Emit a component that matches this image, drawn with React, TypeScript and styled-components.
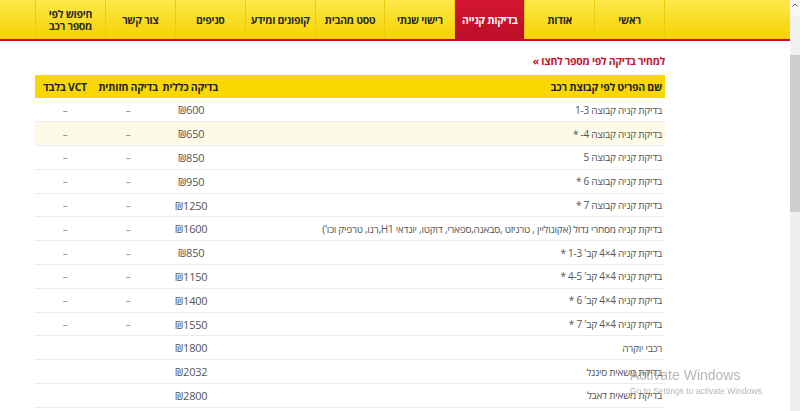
import React from "react";
import styled, { createGlobalStyle } from "styled-components";

const Global = createGlobalStyle`
  html, body { margin: 0; padding: 0; background: #fff; overflow: hidden; }
  body { font-family: "Open Sans", "Liberation Sans", "DejaVu Sans", sans-serif; }
  * { box-sizing: border-box; }
`;

const Page = styled.div`
  display: flex;
  width: 800px;
  height: 411px;
  overflow: hidden;
`;

const Main = styled.div`
  flex: 1;
  direction: rtl;
  min-width: 0;
`;

const NavBar = styled.nav`
  height: 41px;
  background: linear-gradient(#fde84a, #f6d300);
  border-bottom: 2px solid #c8102e;
`;

const NavInner = styled.ul`
  list-style: none;
  margin: 0 125px 0 0;
  padding: 0;
  width: 630px;
  height: 39px;
  display: flex;
  border-right: 1px solid #eccb12;
`;

const NavItem = styled.li<{ $active?: boolean }>`
  width: 70px;
  height: 39px;
  display: flex;
  align-items: center;
  justify-content: center;
  text-align: center;
  font-size: 10.5px;
  letter-spacing: -0.3px;
  line-height: 12px;
  font-weight: 700;
  color: ${(p) => (p.$active ? "#fff" : "#2a2a2a")};
  background: ${(p) => (p.$active ? "linear-gradient(#d3152f, #bd0e28)" : "transparent")};
  border-left: 1px solid #eccb12;
  padding: 0 1px;
`;

const NavLabel = styled.span<{ $narrow?: boolean }>`
  max-width: ${(p) => (p.$narrow ? "56px" : "68px")};
`;

const Content = styled.div`
  width: 630px;
  margin: 0 125px 0 0;
`;

const PriceLink = styled.a`
  display: block;
  margin-top: 12px;
  height: 16px;
  line-height: 16px;
  font-size: 10.5px;
  letter-spacing: -0.3px;
  font-weight: 700;
  color: #c41230;
  text-decoration: none;
`;

const Table = styled.table`
  width: 630px;
  margin-top: 6px;
  border-collapse: collapse;
  table-layout: fixed;
  letter-spacing: -0.25px;
`;

const HeadCell = styled.th<{ $w?: number; $align?: string }>`
  background: #f8d800;
  height: 23px;
  padding: 0 3px;
  font-size: 10.5px;
  font-weight: 700;
  color: #1e1e1e;
  text-align: ${(p) => p.$align || "center"};
  width: ${(p) => (p.$w ? `${p.$w}px` : "auto")};
  white-space: nowrap;
`;

const Row = styled.tr<{ $hl?: boolean }>`
  height: 23.8px;
  background: ${(p) => (p.$hl ? "#fdfae8" : "#fff")};
  border-bottom: 1px solid #ececec;
`;

const Cell = styled.td<{ $align?: string; $muted?: boolean; $ltr?: boolean }>`
  padding: 0 3px;
  font-size: ${(p) => (p.$ltr ? "11px" : "10px")};
  color: ${(p) => (p.$muted ? "#888" : "#555")};
  text-align: ${(p) => p.$align || "center"};
  direction: ${(p) => (p.$ltr ? "ltr" : "rtl")};
  white-space: nowrap;
`;

const ScrollTrack = styled.div`
  width: 10px;
  height: 411px;
  background: #efefef;
  display: flex;
  flex-direction: column;
  align-items: center;
`;

const ScrollArrow = styled.div`
  height: 16px;
  width: 100%;
  background: #f7f7f7;
  display: flex;
  justify-content: center;
  padding-top: 3px;
`;

const ScrollGap = styled.div`
  height: 39px;
  width: 100%;
  background: #f1f1f1;
`;

const ScrollThumb = styled.div`
  width: 100%;
  height: 157px;
  background: #cdcdcd;
`;

const Watermark = styled.div`
  position: fixed;
  left: 630px;
  top: 366px;
  direction: ltr;
  color: rgba(120, 120, 120, 0.55);
  font-family: "Liberation Sans", "DejaVu Sans", sans-serif;
  pointer-events: none;
`;

const WmTitle = styled.div`
  font-size: 14px;
  line-height: 18px;
`;

const WmSub = styled.div`
  font-size: 8.5px;
  line-height: 12px;
  margin-top: 1px;
`;

const navItems = [
  "ראשי",
  "אודות",
  "בדיקות קנייה",
  "רישוי שנתי",
  "טסט מהבית",
  "קופונים ומידע",
  "סניפים",
  "צור קשר",
  "חיפוש לפי מספר רכב",
];

type R = { name: string; price: string; dash: boolean };

const rows: R[] = [
  { name: "בדיקת קניה קבוצה 1-3", price: "₪600", dash: true },
  { name: "בדיקת קניה קבוצה 4- *", price: "₪650", dash: true },
  { name: "בדיקת קניה קבוצה 5", price: "₪850", dash: true },
  { name: "בדיקת קניה קבוצה 6 *", price: "₪950", dash: true },
  { name: "בדיקת קניה קבוצה 7 *", price: "₪1250", dash: true },
  {
    name: "בדיקת קניה מסחרי גדול (אקונוליין , טרניזט ,סבאנה,ספארי, דוקטו, יונדאי H1,רנו, טרפיק וכו')",
    price: "₪1600",
    dash: true,
  },
  { name: "בדיקת קניה 4×4 קב' 1-3 *", price: "₪850", dash: true },
  { name: "בדיקת קניה 4×4 קב' 4-5 *", price: "₪1150", dash: true },
  { name: "בדיקת קניה 4×4 קב' 6 *", price: "₪1400", dash: true },
  { name: "בדיקת קניה 4×4 קב' 7 *", price: "₪1550", dash: true },
  { name: "רכבי יוקרה", price: "₪1800", dash: false },
  { name: "בדיקת משאית סינגל", price: "₪2032", dash: false },
  { name: "בדיקת משאית דאבל", price: "₪2800", dash: false },
];

export default function App() {
  return (
    <>
      <Global />
      <Page>
        <Main>
          <NavBar>
            <NavInner>
              {navItems.map((n) => (
                <NavItem key={n} $active={n === "בדיקות קנייה"}>
                  <NavLabel $narrow={n === "חיפוש לפי מספר רכב"}>{n}</NavLabel>
                </NavItem>
              ))}
            </NavInner>
          </NavBar>
          <Content>
            <PriceLink href="#">למחיר בדיקה לפי מספר לחצו »</PriceLink>
            <Table>
              <thead>
                <tr>
                  <HeadCell $align="right">שם הפריט לפי קבוצת רכב</HeadCell>
                  <HeadCell $w={60}>בדיקה כללית</HeadCell>
                  <HeadCell $w={66}>בדיקה חזותית</HeadCell>
                  <HeadCell $w={60}>VCT בלבד</HeadCell>
                </tr>
              </thead>
              <tbody>
                {rows.map((r, i) => (
                  <Row key={i} $hl={i === 1}>
                    <Cell $align="right">{r.name}</Cell>
                    <Cell $ltr>{r.price}</Cell>
                    <Cell $muted>{r.dash ? "–" : ""}</Cell>
                    <Cell $muted>{r.dash ? "–" : ""}</Cell>
                  </Row>
                ))}
              </tbody>
            </Table>
          </Content>
        </Main>
        <ScrollTrack>
          <ScrollArrow>
            <svg width="6" height="4" viewBox="0 0 6 4">
              <path d="M0.5 3.5 L3 1 L5.5 3.5" fill="none" stroke="#606060" strokeWidth="1" />
            </svg>
          </ScrollArrow>
          <ScrollGap />
          <ScrollThumb />
        </ScrollTrack>
        <Watermark>
          <WmTitle>Activate Windows</WmTitle>
          <WmSub>Go to Settings to activate Windows.</WmSub>
        </Watermark>
      </Page>
    </>
  );
}
